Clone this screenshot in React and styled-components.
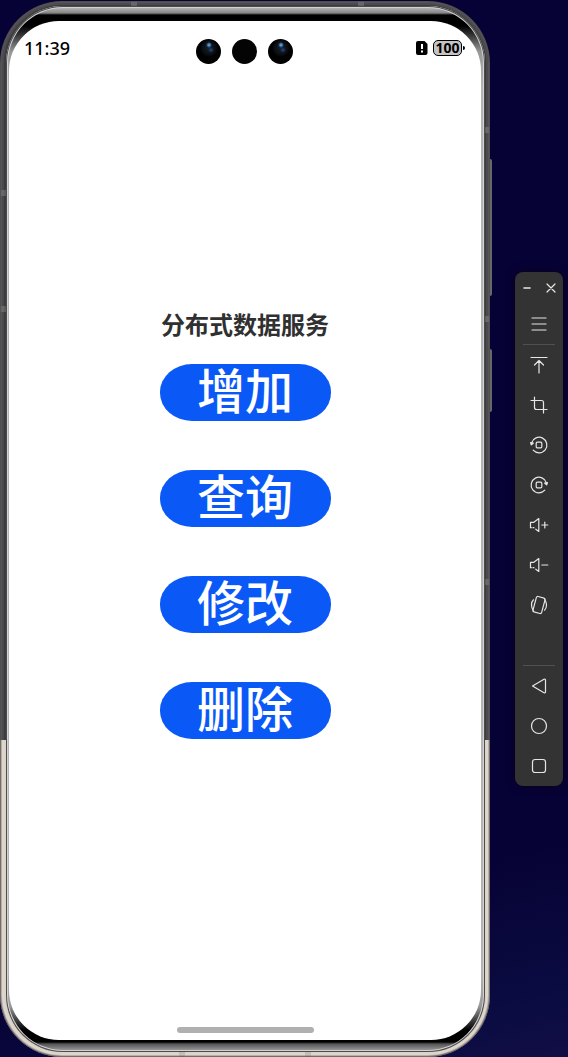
import styled, { createGlobalStyle } from "styled-components"

const GlobalStyle = createGlobalStyle`
  * {
    box-sizing: border-box;
  }
  html,
  body,
  #root {
    height: 100%;
    margin: 0;
  }
  body {
    font-family: "Noto Sans", "Noto Sans CJK SC", sans-serif;
    background: linear-gradient(165deg, #070235 0%, #070235 82%, #0a0c42 95%, #120d45 100%);
  }
`

const Desktop = styled.main`
  display: flex;
  align-items: flex-start;
  gap: 24px;
  min-height: 100vh;
  padding-right: 5px;
`

const Phone = styled.div`
  position: relative;
  display: flex;
  flex: 1;
  height: 100vh;
  min-height: 640px;
  padding: 1px 1px 0 0;
`

/* Metal frame: antenna bands over a dark upper and a champagne lower part */
const Shell = styled.div`
  display: flex;
  flex: 1;
  padding: 5px 5px 5px 6px;
  border-radius: 62px;
  background:
    linear-gradient(#5c5c5c, #5c5c5c) 27% 0 / 6px 5px no-repeat,
    linear-gradient(#5c5c5c, #5c5c5c) 74% 0 / 6px 5px no-repeat,
    linear-gradient(#5c5c5c, #5c5c5c) 0 18% / 6px 6px no-repeat,
    linear-gradient(#5c5c5c, #5c5c5c) 0 29% / 6px 6px no-repeat,
    linear-gradient(#5c5c5c, #5c5c5c) 100% 12% / 5px 6px no-repeat,
    linear-gradient(#5c5c5c, #5c5c5c) 100% 30% / 5px 6px no-repeat,
    linear-gradient(#5c5c5c, #5c5c5c) 100% 55% / 5px 6px no-repeat,
    linear-gradient(#c0bab2, #c0bab2) 37% 100% / 6px 5px no-repeat,
    linear-gradient(#c0bab2, #c0bab2) 63% 100% / 6px 5px no-repeat,
    linear-gradient(180deg, #3c3b40 70%, #dcd3c8 70%);
  box-shadow:
    inset 0 0 0 1px rgba(80, 74, 74, 0.65),
    inset 0 0 0 2px rgba(110, 104, 100, 0.35),
    inset 0 0 0 4px rgba(255, 255, 255, 0.08);
`

const Bezel = styled.div`
  display: flex;
  flex: 1;
  padding: 15px 4px 12px 3px;
  border-radius: 57px;
  background: linear-gradient(
    180deg,
    #c4c4c4 0,
    #858585 7px,
    #000 9px,
    #000 20px,
    #999 46px,
    #b4b4b4 80px,
    #b4b4b4 calc(100% - 80px),
    #999 calc(100% - 46px),
    #000 calc(100% - 22px),
    #000 calc(100% - 10px),
    #555 calc(100% - 8px),
    #aaa 100%
  );
  box-shadow:
    inset 0 0 0 1px #4c4c4c,
    inset 0 0 0 2px #d2d2d2;
`

const Screen = styled.section`
  display: flex;
  flex: 1;
  flex-direction: column;
  align-items: center;
  border-radius: 50px;
  background: #fff;
`

const StatusBar = styled.header`
  display: grid;
  grid-template-columns: 1fr auto 1fr;
  width: 100%;
  padding: 14px 16px 0 15px;
`

const Clock = styled.time`
  color: #000;
  font-size: 18px;
  font-weight: 500;
  line-height: 26px;
`

const Cameras = styled.div`
  display: flex;
  gap: 11px;
  padding-top: 4px;
`

const Lens = styled.span`
  width: 25px;
  height: 25px;
  border-radius: 50%;
  background: ${({ $glass }) =>
    $glass
      ? "radial-gradient(circle at 13px 6px, #7ab8ee 0, #24527f 2px, transparent 3px), radial-gradient(circle at 15px 11px, #1f4a7c 0, transparent 3px), radial-gradient(circle at 13px 9px, #15202e 0, #0a0c10 7px, #000 9px)"
      : "#040404"};
`

const Indicators = styled.div`
  display: flex;
  justify-content: flex-end;
  align-items: center;
  gap: 5px;
  height: 26px;
`

const Battery = styled.span`
  display: flex;
  align-items: center;
  gap: 1px;

  &::after {
    content: "";
    width: 2px;
    height: 4px;
    border-radius: 0 2px 2px 0;
    background: #000;
  }
`

const BatteryLevel = styled.span`
  width: 29px;
  height: 16px;
  border: 1px solid #000;
  border-radius: 5px;
  background: #c4c4c4;
  color: #000;
  font-size: 14px;
  font-weight: 700;
  line-height: 14px;
  text-align: center;
`

const Content = styled.div`
  display: flex;
  flex: 1;
  flex-direction: column;
  justify-content: center;
  align-items: center;
  padding-bottom: 44px;
`

const Title = styled.h1`
  margin: 0 0 22px;
  color: #303030;
  font-size: 24px;
  font-weight: 700;
  line-height: 34px;
`

const Actions = styled.div`
  display: flex;
  flex-direction: column;
  gap: 49px;
`

const ActionButton = styled.button`
  width: 171px;
  height: 57px;
  padding: 0 0 3px;
  border: 0;
  border-radius: 32px / 28px;
  background: #0a59f7;
  color: #fff;
  font-family: inherit;
  font-size: 48px;
  font-weight: 500;
  line-height: 54px;
  cursor: pointer;
`

const HomeBar = styled.div`
  width: 137px;
  height: 6px;
  margin-bottom: 7px;
  border-radius: 3px;
  background: #b0b0b0;
`

const SideKey = styled.span`
  position: absolute;
  right: -1px;
  top: ${({ $top }) => $top};
  width: 2px;
  height: ${({ $size }) => $size};
  border-radius: 0 2px 2px 0;
  background: #68686c;
`

const Toolbar = styled.aside`
  display: flex;
  flex-direction: column;
  align-items: center;
  width: 48px;
  margin-top: 272px;
  border-radius: 8px;
  background: #333;
  box-shadow: 0 0 8px rgba(0, 0, 0, 0.5);
`

const WindowControls = styled.div`
  display: flex;
  justify-content: space-between;
  width: 100%;
  height: 32px;
`

const ToolButton = styled.button`
  display: grid;
  place-items: center;
  width: ${({ $small }) => ($small ? "24px" : "48px")};
  height: ${({ $small }) => ($small ? "32px" : "40px")};
  padding: 0;
  border: 0;
  background: none;
  color: #e6e6e6;
  cursor: pointer;
`

const Divider = styled.hr`
  width: 32px;
  height: 1px;
  margin: 0;
  border: 0;
  background: #505050;
`

const Spacer = styled.div`
  height: 40px;
`

const Icon = ({ children }) => (
  <svg
    width="20"
    height="20"
    viewBox="0 0 20 20"
    fill="none"
    stroke="currentColor"
    strokeWidth="1.2"
    strokeLinecap="round"
    strokeLinejoin="round"
    aria-hidden="true"
  >
    {children}
  </svg>
)

const speaker = "M2.3 12.7H1.5V7.3H4.8L9.8 3.6V16.4L6.8 14.2M4 12.7H4.9"

const tools = [
  {
    label: "置顶",
    icon: <path d="M2 2.5H18M10 18V6M5.5 10L10 5.5L14.5 10" />,
  },
  {
    label: "截图",
    icon: <path d="M2 5.5H12.5Q14.5 5.5 14.5 7.5V18M5.5 2V12.5Q5.5 14.5 7.5 14.5H18" />,
  },
  {
    label: "向左旋转",
    icon: (
      <>
        <path d="M2.6 7.8A7.8 7.8 0 1 1 4.2 15.2" />
        <path d="M1.6 7.6L4.3 8.2L2.3 9.8Z" fill="currentColor" />
        <rect x="7.2" y="7.2" width="5.6" height="5.6" rx="1" />
      </>
    ),
  },
  {
    label: "向右旋转",
    icon: (
      <>
        <path d="M17.4 7.8A7.8 7.8 0 1 0 15.8 15.2" />
        <path d="M18.4 7.6L15.7 8.2L17.7 9.8Z" fill="currentColor" />
        <rect x="7.2" y="7.2" width="5.6" height="5.6" rx="1" />
      </>
    ),
  },
  {
    label: "音量加",
    icon: <path d={`${speaker}M12.8 10H18.8M15.8 7V13`} />,
  },
  {
    label: "音量减",
    icon: <path d={`${speaker}M12.8 10H18.8`} />,
  },
  {
    label: "摇一摇",
    icon: (
      <>
        <rect x="5.5" y="2" width="9" height="16" rx="1.5" transform="rotate(15 10 10)" />
        <path d="M4.5 4.8Q2.5 6.5 2.5 10Q2.5 13 4.3 15.5M15.5 15.2Q17.5 13.5 17.5 10Q17.5 7 15.7 4.5" />
      </>
    ),
  },
]

const navigation = [
  { label: "返回", icon: <path d="M3.5 10L15 3.3Q16.5 2.7 16.5 4V16Q16.5 17.3 15 16.7Z" /> },
  { label: "主页", icon: <circle cx="10" cy="10" r="7.5" /> },
  { label: "最近任务", icon: <rect x="3.5" y="3.5" width="13" height="13" rx="2.5" /> },
]

const actions = ["增加", "查询", "修改", "删除"]

export default function App() {
  return (
    <>
      <GlobalStyle />
      <Desktop>
        <Phone>
          <SideKey $top="15%" $size="13%" />
          <SideKey $top="33%" $size="6%" />
          <Shell>
            <Bezel>
              <Screen>
                <StatusBar>
                  <Clock>11:39</Clock>
                  <Cameras>
                    <Lens $glass />
                    <Lens />
                    <Lens $glass />
                  </Cameras>
                  <Indicators>
                    <svg width="12" height="14" viewBox="0 0 12 14" aria-hidden="true">
                      <path d="M2 0H8.5L11.5 3V12Q11.5 14 9.5 14H2Q0 14 0 12V2Q0 0 2 0Z" fill="#000" />
                      <path d="M6 3V8M6 9.5V11.5" stroke="#fff" strokeWidth="2" />
                    </svg>
                    <Battery>
                      <BatteryLevel>100</BatteryLevel>
                    </Battery>
                  </Indicators>
                </StatusBar>
                <Content>
                  <Title>分布式数据服务</Title>
                  <Actions>
                    {actions.map((name) => (
                      <ActionButton key={name} type="button">
                        {name}
                      </ActionButton>
                    ))}
                  </Actions>
                </Content>
                <HomeBar />
              </Screen>
            </Bezel>
          </Shell>
        </Phone>

        <Toolbar>
          <WindowControls>
            <ToolButton $small type="button" aria-label="最小化">
              <Icon>
                <path d="M7 10H13" strokeWidth="1.6" />
              </Icon>
            </ToolButton>
            <ToolButton $small type="button" aria-label="关闭">
              <Icon>
                <path d="M6 6L14 14M14 6L6 14" />
              </Icon>
            </ToolButton>
          </WindowControls>
          <ToolButton type="button" aria-label="菜单">
            <Icon>
              <path d="M3 4H17M3 10H17M3 16H17" />
            </Icon>
          </ToolButton>
          <Divider />
          {tools.map((tool) => (
            <ToolButton key={tool.label} type="button" aria-label={tool.label}>
              <Icon>{tool.icon}</Icon>
            </ToolButton>
          ))}
          <Spacer />
          <Divider />
          {navigation.map((item) => (
            <ToolButton key={item.label} type="button" aria-label={item.label}>
              <Icon>{item.icon}</Icon>
            </ToolButton>
          ))}
        </Toolbar>
      </Desktop>
    </>
  )
}
